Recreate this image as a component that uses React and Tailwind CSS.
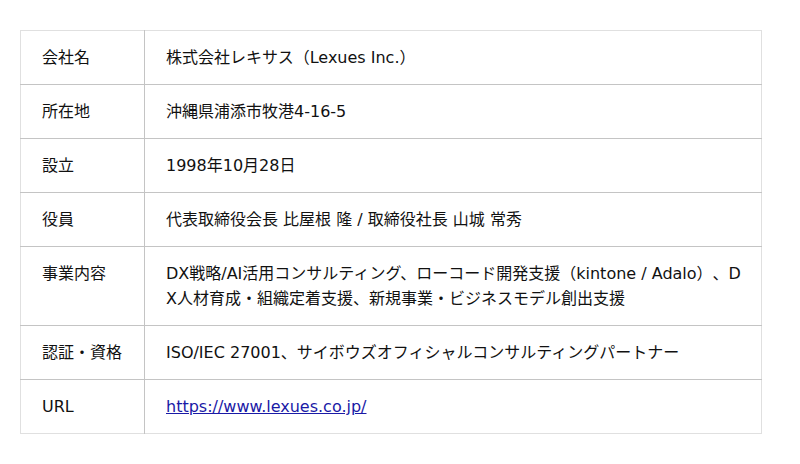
const rows = [
  { label: "会社名", value: "株式会社レキサス（Lexues Inc.）" },
  { label: "所在地", value: "沖縄県浦添市牧港4-16-5" },
  { label: "設立", value: "1998年10月28日" },
  { label: "役員", value: "代表取締役会長 比屋根 隆 / 取締役社長 山城 常秀" },
  {
    label: "事業内容",
    value:
      "DX戦略/AI活用コンサルティング、ローコード開発支援（kintone / Adalo）、DX人材育成・組織定着支援、新規事業・ビジネスモデル創出支援",
  },
  { label: "認証・資格", value: "ISO/IEC 27001、サイボウズオフィシャルコンサルティングパートナー" },
  { label: "URL", value: "https://www.lexues.co.jp/", link: true },
];

export default function App() {
  return (
    <div className="w-[800px] h-[464px] bg-white pt-[30px] pl-[20px] font-['DejaVu_Sans','Noto_Sans_CJK_JP',sans-serif] text-[16px] leading-[25px] text-[#111] [text-spacing-trim:space-all] break-all">
      <table className="w-[742px] border-collapse border border-[#e0e0e0]">
        <tbody>
          {rows.map((row, i) => (
            <tr
              key={row.label}
              className={i < rows.length - 1 ? "border-b border-[#c4c4c4]" : ""}
            >
              <td className="w-[124px] border-r border-[#c4c4c4] py-[14px] pl-[21px] pr-2 align-top">
                {row.label}
              </td>
              <td className="py-[14px] pl-[21px] pr-[16px] align-top">
                {row.link ? (
                  <a href="#" className="text-[#1a1aa6] underline">
                    {row.value}
                  </a>
                ) : (
                  row.value
                )}
              </td>
            </tr>
          ))}
        </tbody>
      </table>
    </div>
  );
}
